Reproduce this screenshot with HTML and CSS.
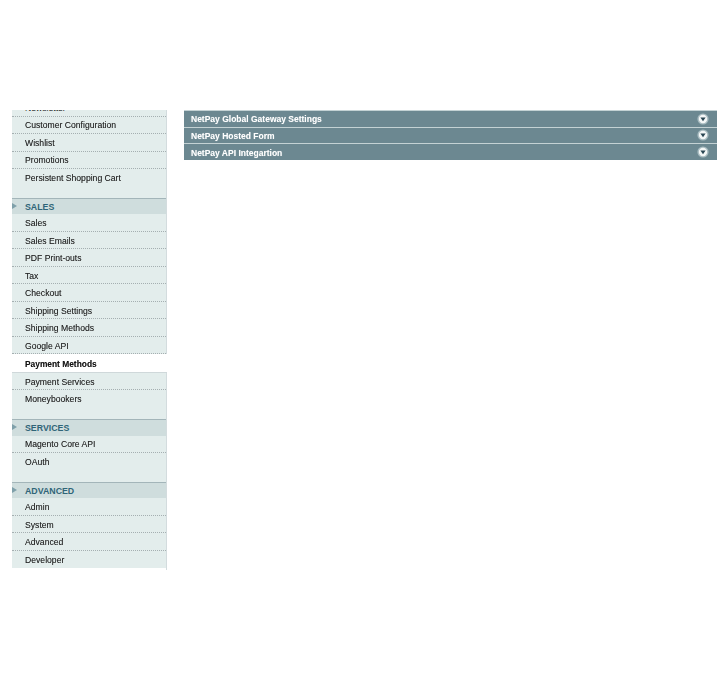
FILE: index.html
```html
<!DOCTYPE html>
<html lang="en">
<head>
<meta charset="utf-8">
<title>Payment Methods</title>
<link rel="stylesheet" href="styles.css">
</head>
<body>
<div class="page">
  <aside class="sidebar">
    <div class="nav">
      <div class="clipped"><span>Newsletter</span></div>
      <a class="item">Customer Configuration</a>
      <a class="item">Wishlist</a>
      <a class="item">Promotions</a>
      <a class="item last">Persistent Shopping Cart</a>
      <h3 class="head"><svg class="arrow" viewBox="0 0 5 6"><path d="M0 0L5 3L0 6Z"/></svg>SALES</h3>
      <a class="item">Sales</a>
      <a class="item">Sales Emails</a>
      <a class="item">PDF Print-outs</a>
      <a class="item">Tax</a>
      <a class="item">Checkout</a>
      <a class="item">Shipping Settings</a>
      <a class="item">Shipping Methods</a>
      <a class="item">Google API</a>
      <a class="item active">Payment Methods</a>
      <a class="item">Payment Services</a>
      <a class="item last">Moneybookers</a>
      <h3 class="head"><svg class="arrow" viewBox="0 0 5 6"><path d="M0 0L5 3L0 6Z"/></svg>SERVICES</h3>
      <a class="item">Magento Core API</a>
      <a class="item last">OAuth</a>
      <h3 class="head"><svg class="arrow" viewBox="0 0 5 6"><path d="M0 0L5 3L0 6Z"/></svg>ADVANCED</h3>
      <a class="item">Admin</a>
      <a class="item">System</a>
      <a class="item">Advanced</a>
      <a class="item end">Developer</a>
    </div>
  </aside>
  <main class="panels">
    <div class="bar"><span>NetPay Global Gateway Settings</span><svg class="toggle" viewBox="0 0 12 12"><circle cx="6" cy="6" r="5.6" fill="#a9bcc1"/><circle cx="6" cy="6" r="4.2" fill="#f4f7f7"/><path d="M3.4 4.4H8.6L6 8.2Z" fill="#2a4653"/></svg></div>
    <div class="bar"><span>NetPay Hosted Form</span><svg class="toggle" viewBox="0 0 12 12"><circle cx="6" cy="6" r="5.6" fill="#a9bcc1"/><circle cx="6" cy="6" r="4.2" fill="#f4f7f7"/><path d="M3.4 4.4H8.6L6 8.2Z" fill="#2a4653"/></svg></div>
    <div class="bar"><span>NetPay API Integartion</span><svg class="toggle" viewBox="0 0 12 12"><circle cx="6" cy="6" r="5.6" fill="#a9bcc1"/><circle cx="6" cy="6" r="4.2" fill="#f4f7f7"/><path d="M3.4 4.4H8.6L6 8.2Z" fill="#2a4653"/></svg></div>
  </main>
</div>
</body>
</html>
```
FILE: styles.css
```css
html, body { margin: 0; background: #fff; }
.page {
  display: flex;
  align-items: flex-start;
  gap: 17px;
  padding: 110px 8px 0 12px;
  font-family: "Liberation Sans", Arial, sans-serif;
  font-size: 8.64px;
  filter: blur(0.4px);
}
.sidebar {
  width: 154px;
  height: 460px;
  flex: none;
  border-right: 1px solid #d3dcde;
}
.nav { background: #e3edec; }
.clipped {
  height: 5.5px;
  overflow: hidden;
  padding-left: 13px;
  color: #222;
  border-bottom: 1px dotted #a5afb1;
  line-height: 10px;
}
.clipped span { display: block; margin-top: -7px; }
.item {
  display: flex;
  align-items: center;
  box-sizing: border-box;
  height: 17.5px;
  padding: 1px 0 0 13px;
  color: #222;
  border-bottom: 1px dotted #a5afb1;
  text-shadow: 0 0 0.6px rgba(0,0,0,.35);
}
.item.last { height: 29px; align-items: flex-start; padding-top: 4px; border-bottom: 0; }
.item.end { border-bottom: 0; }
.item.active {
  height: 18.5px;
  background: #fff;
  color: #111;
  font-size: 8.4px;
  font-weight: 700;
  margin-right: -1px;
  border-bottom: 1px solid #cfd8da;
}
.head {
  display: flex;
  align-items: center;
  position: relative;
  box-sizing: border-box;
  height: 16.25px;
  margin: 0;
  padding-left: 13px;
  font-size: 8.8px;
  font-weight: 700;
  color: #2f6578;
  background: #cfdddd;
  border-top: 1px solid #a3b5b9;
}
.arrow {
  position: absolute;
  left: 0;
  top: 4px;
  width: 5px;
  height: 6px;
  fill: #7fa0aa;
}
.panels { flex: 1; }
.bar {
  display: flex;
  align-items: center;
  justify-content: space-between;
  box-sizing: border-box;
  height: 16.67px;
  padding: 0 8px 0 7px;
  background: #6c8891;
  border-top: 1px solid #c4d2d4;
  color: #fff;
  font-size: 8.5px;
  font-weight: 700;
  text-shadow: 0 0 1px rgba(255,255,255,.4);
}
.bar span { padding-top: 1px; }
.toggle { width: 12px; height: 12px; }
```
